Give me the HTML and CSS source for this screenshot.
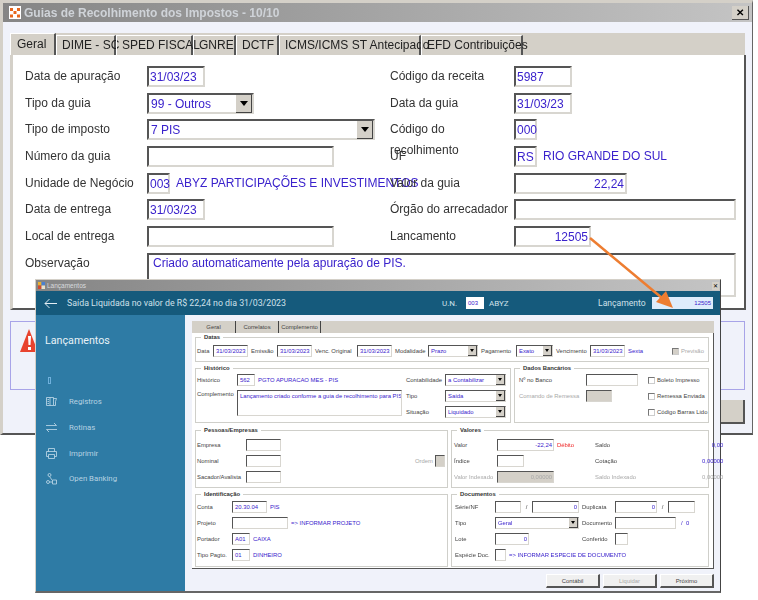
FILE: index.html
```html
<!DOCTYPE html>
<html lang="en">

<head>
    <meta charset="UTF-8">
    <title>Guias de Recolhimento dos Impostos</title>
    <link rel="stylesheet" href="styles.css">
</head>

<body>
    <!-- Back window -->
    <div class="win-back">
        <div class="back-title">
            <svg class="back-icon" width="12" height="13" viewBox="0 0 12 13">
                <rect width="12" height="13" fill="#fff" />
                <path d="M1 2h3v3H1zM8 2h3v3H8zM4.500 5h3v3h-3zM1 8.500h3v3H1zM8 8.500h3v3H8z" fill="#e8661c" />
            </svg>
            <span class="back-title-text">Guias de Recolhimento dos Impostos - 10/10</span>
            <span class="back-close">&#10005;</span>
        </div>
        <div class="back-body">
            <div class="tabs">
                <span class="tab active">Geral</span>
                <span class="tab t1">DIME - SC</span>
                <span class="tab t2">SPED FISCAL</span>
                <span class="tab t3">GNRE</span>
                <span class="tab t4">DCTF</span>
                <span class="tab t5">ICMS/ICMS ST Antecipado</span>
                <span class="tab t6">EFD Contribuições</span>
            </div>
            <div class="tab-page">
                <div class="form">
                    <div class="line"><label>Data de apuração</label><div class="fld w58">31/03/23</div></div>
                    <div class="line"><label>Código da receita</label><div class="fld w58">5987</div></div>
                    <div class="line"><label>Tipo da guia</label><div class="fld sel w107">99 - Outros<i class="drop"></i></div></div>
                    <div class="line"><label>Data da guia</label><div class="fld w58">31/03/23</div></div>
                    <div class="line"><label>Tipo de imposto</label><div class="fld sel w228">7 PIS<i class="drop"></i></div></div>
                    <div class="line"><label>Código do recolhimento</label><div class="fld w23">000</div></div>
                    <div class="line"><label>Número da guia</label><div class="fld w187"></div></div>
                    <div class="line"><label>UF</label><div class="fld w23">RS</div><span class="desc">RIO GRANDE DO SUL</span></div>
                    <div class="line"><label>Unidade de Negócio</label><div class="fld w23">003</div><span class="desc">ABYZ PARTICIPAÇÕES E INVESTIMENTOS</span></div>
                    <div class="line"><label>Valor da guia</label><div class="fld w113 num">22,24</div></div>
                    <div class="line"><label>Data de entrega</label><div class="fld w58">31/03/23</div></div>
                    <div class="line"><label>Órgão do arrecadador</label><div class="fld w222"></div></div>
                    <div class="line"><label>Local de entrega</label><div class="fld w187"></div></div>
                    <div class="line"><label>Lancamento</label><div class="fld w77 num">12505</div></div>
                    <div class="line obs"><label>Observação</label><div class="fld memo">Criado automaticamente pela apuração de PIS.</div></div>
                </div>
            </div>
            <div class="warn-panel">
                <svg width="18" height="24" viewBox="0 0 18 24">
                    <path d="M9 0L18 23H0z" fill="#e8432e" />
                    <path d="M8 7h3l-.5 9h-2zM8 18h3v3H8z" fill="#fff" />
                </svg>
            </div>
            <div class="back-buttons"><span class="back-btn"></span></div>
        </div>
    </div>

    <!-- Lancamentos window -->
    <div class="win-front">
        <div class="front-title">
            <svg width="7" height="7" viewBox="0 0 7 7">
                <rect width="3.500" height="3.500" fill="#e8b030" />
                <rect x="3.500" width="3.500" height="3.500" fill="#4a80d0" />
                <rect y="3.500" width="3.500" height="3.500" fill="#d04a30" />
                <rect x="3.500" y="3.500" width="3.500" height="3.500" fill="#e8e0c8" />
            </svg>
            <span class="front-title-text">Lançamentos</span>
            <span class="front-close">&#10005;</span>
        </div>
        <div class="front-head">
            <svg class="back-arrow" width="13" height="11" viewBox="0 0 13 11">
                <path d="M13 5.500H1M5.500 1L1 5.500 5.500 10" fill="none" stroke="#e4eef4" stroke-width="1" />
            </svg>
            <span class="head-title">Saída Liquidada no valor de R$ 22,24 no dia 31/03/2023</span>
            <span class="head-un">U.N.</span>
            <span class="head-un-fld">003</span>
            <span class="head-abyz">ABYZ</span>
            <span class="head-lanc">Lançamento</span>
            <span class="head-lanc-fld">12505</span>
        </div>
        <div class="front-body">
            <div class="sidebar">
                <div class="side-title">Lançamentos</div>
                <div class="side-glyph"></div>
                <div class="side-item">
                    <svg width="11" height="11" viewBox="0 0 11 11" fill="none" stroke="#c4dcea" stroke-width=".8">
                        <path d="M.5 1.500h7v8h-7zM4 1.500v8M1.500 3.500h1.500M1.500 5.500h1.500M1.500 7.500h1.500M7.500 2.500h3l-1 3v4h-2" />
                    </svg>
                    <span>Registros</span>
                </div>
                <div class="side-item">
                    <svg width="11" height="11" viewBox="0 0 11 11" fill="none" stroke="#c4dcea" stroke-width=".8">
                        <path d="M0 3.500h10.500L8 1M11 7.500H.5L3 10" />
                    </svg>
                    <span>Rotinas</span>
                </div>
                <div class="side-item">
                    <svg width="11" height="11" viewBox="0 0 11 11" fill="none" stroke="#c4dcea" stroke-width=".8">
                        <path d="M2.500 3.500V.5h6v3M2.500 8.500h-2v-5h10v5h-2M2.500 6.500h6v4h-6z" />
                    </svg>
                    <span>Imprimir</span>
                </div>
                <div class="side-item">
                    <svg width="11" height="12" viewBox="0 0 11 12" fill="none" stroke="#c4dcea" stroke-width=".8">
                        <circle cx="3.500" cy="2" r="1.500" />
                        <circle cx="2" cy="9" r="1.500" />
                        <path d="M3.500 3.500L6 7M3.500 9H6.500v-2h4v4h-4v-2" />
                    </svg>
                    <span>Open Banking</span>
                </div>
            </div>
            <div class="content">
                <div class="mini-tabs">
                    <span class="mini-tab active">Geral</span>
                    <span class="mini-tab m1">Correlatos</span>
                    <span class="mini-tab m2">Complemento</span>
                </div>
                <div class="mini-page">
                    <div class="group g-datas">
                        <span class="legend">Datas</span>
                        <div class="datas-row">
                            <span>Data</span><span class="box val">31/03/2023</span>
                            <span class="pl">Emissão</span><span class="box val">31/03/2023</span>
                            <span class="pl">Venc. Original</span><span class="box val">31/03/2023</span>
                            <span class="pl">Modalidade</span><span class="box val box-sel">Prazo<i class="mini-drop"></i></span>
                            <span class="pl">Pagamento</span><span class="box val box-sel">Exato<i class="mini-drop"></i></span>
                            <span class="pl">Vencimento</span><span class="box val">31/03/2023</span>
                            <span class="pl blue">Sexta</span>
                            <span class="check-line off"><i class="check gray"></i>Previsão</span>
                        </div>
                    </div>

                    <div class="group-row r-hist">
                        <div class="group g-hist">
                            <span class="legend">Histórico</span>
                            <div class="hist-left">
                                <span>Histórico</span>
                                <div class="inline"><span class="box val b18">562</span><span class="blue">PGTO APURACAO MES - PIS</span></div>
                                <span class="top">Complemento</span>
                                <div class="box memo-mini val">Lançamento criado conforme a guia de recolhimento para PIS</div>
                            </div>
                            <div class="hist-right">
                                <span>Contabilidade</span><span class="box val box-sel">a Contabilizar<i class="mini-drop"></i></span>
                                <span>Tipo</span><span class="box val box-sel">Saída<i class="mini-drop"></i></span>
                                <span>Situação</span><span class="box val box-sel">Liquidado<i class="mini-drop"></i></span>
                            </div>
                        </div>
                        <div class="group g-banco">
                            <span class="legend">Dados Bancários</span>
                            <div class="banco-grid">
                                <span>Nº no Banco</span><span class="box b52"></span><span class="check-line"><i class="check"></i>Boleto Impresso</span>
                                <span class="off">Comando de Remessa</span><span class="box b26 gray"></span><span class="check-line"><i class="check"></i>Remessa Enviada</span>
                                <span></span><span></span><span class="check-line"><i class="check"></i>Código Barras Lido</span>
                            </div>
                        </div>
                    </div>

                    <div class="group-row r-pessoas">
                        <div class="group g-left">
                            <span class="legend">Pessoas/Empresas</span>
                            <div class="pessoas-grid">
                                <span>Empresa</span><span class="box b35"></span><span></span>
                                <span>Nominal</span><span class="box b35"></span><span class="ordem"><span class="off">Ordem</span><span class="box b10 gray"></span></span>
                                <span>Sacador/Avalista</span><span class="box b35"></span><span></span>
                            </div>
                        </div>
                        <div class="group g-right">
                            <span class="legend">Valores</span>
                            <div class="valores-grid">
                                <span>Valor</span><div class="inline"><span class="box val b57 num">-22,24</span><span class="red">Débito</span></div><span>Saldo</span><span class="blue num">0,00</span>
                                <span>Índice</span><span class="box b27"></span><span>Cotação</span><span class="blue num">0,00000</span>
                                <span class="off">Valor Indexado</span><span class="box b57 gray num off">0,00000</span><span class="off">Saldo Indexado</span><span class="off num">0,00000</span>
                            </div>
                        </div>
                    </div>

                    <div class="group-row r-ident">
                        <div class="group g-left">
                            <span class="legend">Identificação</span>
                            <div class="ident-grid">
                                <span>Conta</span><div class="inline"><span class="box val b35">20.30.04</span><span class="blue">PIS</span></div>
                                <span>Projeto</span><div class="inline"><span class="box b56"></span><span class="blue">=&gt; INFORMAR PROJETO</span></div>
                                <span>Portador</span><div class="inline"><span class="box val b18">A01</span><span class="blue">CAIXA</span></div>
                                <span>Tipo Pagto.</span><div class="inline"><span class="box val b18">01</span><span class="blue">DINHEIRO</span></div>
                            </div>
                        </div>
                        <div class="group g-right">
                            <span class="legend">Documentos</span>
                            <div class="docs-grid">
                                <span>Série/NF</span>
                                <div class="inline tight"><span class="box b26"></span><span class="slash">/</span><span class="box val b47 num">0</span></div>
                                <span class="pl">Duplicata</span>
                                <div class="inline tight"><span class="box val b42 num">0</span><span class="slash">/</span><span class="box b27"></span></div>

                                <span>Tipo</span><span class="box val box-sel b84">Geral<i class="mini-drop"></i></span>
                                <span class="pl">Documento</span>
                                <div class="inline"><span class="box b61"></span><span class="blue doc-zero">/ &nbsp;0</span></div>

                                <span>Lote</span><span class="box val b34 num">0</span>
                                <span class="pl">Conferido</span><span class="box b13"></span>

                                <span>Espécie Doc.</span>
                                <div class="inline wide"><span class="box b11"></span><span class="blue">=&gt; INFORMAR ESPECIE DE DOCUMENTO</span></div>
                            </div>
                        </div>
                    </div>
                </div>
                <div class="front-buttons">
                    <span class="front-btn">Contábil</span>
                    <span class="front-btn off">Liquidar</span>
                    <span class="front-btn">Próximo</span>
                </div>
            </div>
        </div>
    </div>

    <!-- Callout arrow -->
    <svg class="callout" width="758" height="600" viewBox="0 0 758 600">
        <path d="M590 238L662 298" fill="none" stroke="#ed7d31" stroke-width="2.500" />
        <path d="M673 308L656 302 666 291z" fill="#ed7d31" />
    </svg>
</body>

</html>
```

FILE: styles.css
```css
body {
    margin: 0;
    background-color: white;
    font-family: "Liberation Sans", Arial, sans-serif;
    font-size: 12px;
    color: #333;
}

/* Back window */
.win-back {
    box-sizing: border-box;
    width: 753px;
    height: 435px;
    background-color: #f0f2fa;
    border: 3px solid #d4d0c8;
    border-bottom: 2px solid #555;
    border-right: 1px solid #666;
    filter: blur(.3px);
}

.back-title {
    height: 19px;
    display: flex;
    align-items: center;
    padding: 0 3px 0 6px;
    background: linear-gradient(to right, #858585, #c4c4c4);
}

.back-icon {
    margin-right: 3px;
}

.back-title-text {
    flex: 1;
    font-size: 12px;
    font-weight: bold;
    color: #cfd3d8;
}

.back-close {
    width: 16px;
    height: 13px;
    line-height: 13px;
    text-align: center;
    font-size: 10px;
    font-weight: bold;
    color: black;
    background-color: #d4d0c8;
    border-right: 1px solid #555;
    border-bottom: 1px solid #555;
}

.back-body {
    padding: 11px 0 0 7px;
}

.tabs {
    width: 735px;
    height: 22px;
    display: flex;
    background-color: #d4d0c8;
}

.tab {
    box-sizing: border-box;
    height: 20px;
    margin-top: 2px;
    line-height: 19px;
    padding-left: 5px;
    border-left: 1px solid white;
    border-top: 1px solid white;
    border-right: 2px solid #555;
    color: #222;
    white-space: nowrap;
}

.tab.active {
    width: 46px;
    height: 22px;
    margin-top: 0;
    line-height: 21px;
    padding-left: 6px;
}

.t1 { width: 60px; }
.t2 { width: 77px; }
.t3 { width: 43px; }
.t4 { width: 43px; }
.t5 { width: 142px; }
.t6 { width: 102px; }

.tab-page {
    box-sizing: border-box;
    width: 736px;
    height: 255px;
    background-color: white;
    border-left: 3px solid #d4d0c8;
    border-right: 2px solid #555;
    border-bottom: 2px solid #555;
    padding: 11px 0 0 12px;
}

.form {
    display: grid;
    grid-template-columns: 365px 1fr;
    grid-auto-rows: 26.67px;
}

.line {
    display: flex;
    align-items: flex-start;
}

.line:nth-child(even) label {
    width: 124px;
}

.line label {
    width: 122px;
    line-height: 21px;
    flex-shrink: 0;
}

.obs {
    grid-column: 1 / 3;
}

.fld {
    box-sizing: border-box;
    height: 21px;
    line-height: 19px;
    padding-left: 1px;
    background-color: white;
    border: 2px solid #d8d6d0;
    border-top-color: #555;
    border-left-color: #555;
    color: #3a22cc;
    white-space: nowrap;
}

.sel {
    display: flex;
    justify-content: space-between;
    padding-left: 2px;
}

.drop {
    width: 15px;
    height: 17px;
    background-color: #d4d0c8;
    border-right: 1px solid #444;
    border-bottom: 1px solid #444;
    position: relative;
}

.drop::after {
    content: "";
    position: absolute;
    left: 4px;
    top: 6px;
    border: 4px solid transparent;
    border-top: 5px solid black;
    border-bottom: 0;
}

.num {
    text-align: right;
}

.fld.num {
    padding-right: 1px;
}

.w23 { width: 23px; }
.w58 { width: 58px; }
.w77 { width: 77px; }
.w107 { width: 107px; }
.w113 { width: 113px; }
.w187 { width: 187px; }
.w222 { width: 222px; }
.w228 { width: 228px; }

.memo {
    width: 589px;
    height: 44px;
    line-height: 17px;
    padding: 0 0 0 4px;
}

.desc {
    margin-left: 6px;
    line-height: 21px;
    color: #3a22cc;
    white-space: nowrap;
}

.warn-panel {
    box-sizing: border-box;
    width: 735px;
    height: 69px;
    margin-top: 11px;
    padding: 7px 0 0 9px;
    border: 1px solid #a8a4e8;
}

.back-buttons {
    display: flex;
    justify-content: flex-end;
    width: 735px;
    margin-top: 10px;
}

.back-btn {
    width: 120px;
    height: 24px;
    background-color: #d4d0c8;
    border-right: 2px solid #555;
    border-bottom: 2px solid #555;
    box-sizing: border-box;
}

/* Lancamentos window */
.win-front {
    position: absolute;
    left: 35px;
    top: 279px;
    box-sizing: border-box;
    width: 686px;
    height: 314px;
    background-color: #f0f2fa;
    border-left: 1px solid #d4d0c8;
    border-top: 1px solid #d4d0c8;
    border-right: 1px solid #444;
    border-bottom: 2px solid #666;
    display: flex;
    flex-direction: column;
    filter: blur(.3px);
}

.front-title {
    height: 11px;
    display: flex;
    align-items: center;
    padding: 0 1px 0 2px;
    background: linear-gradient(to right, #858585, #c4c4c4);
    font-size: 6.500px;
    color: #d8dade;
}

.front-title-text {
    flex: 1;
    margin-left: 2px;
}

.front-close {
    width: 7px;
    height: 8px;
    line-height: 8px;
    text-align: center;
    font-size: 6px;
    color: black;
    background-color: #d4d0c8;
}

.front-head {
    height: 24px;
    display: flex;
    align-items: center;
    background-color: #155a7c;
    color: #cfe0ea;
    font-family: Roboto, sans-serif;
    font-size: 8.800px;
    white-space: nowrap;
}

.back-arrow {
    margin-left: 8px;
}

.head-title {
    margin-left: 10px;
    width: 375px;
}

.head-un {
    width: 24px;
    font-size: 8px;
}

.head-un-fld {
    box-sizing: border-box;
    width: 18px;
    height: 12px;
    line-height: 12px;
    padding-left: 2px;
    font-family: "Liberation Sans", sans-serif;
    font-size: 6px;
    color: #3a22cc;
    background-color: white;
}

.head-abyz {
    width: 109px;
    margin-left: 5px;
    font-size: 8px;
}

.head-lanc {
    width: 54px;
    font-size: 8.600px;
}

.head-lanc-fld {
    box-sizing: border-box;
    width: 61px;
    height: 12px;
    line-height: 12px;
    padding-right: 2px;
    text-align: right;
    font-family: "Liberation Sans", sans-serif;
    font-size: 6px;
    color: #3a22cc;
    background-color: #deecfb;
}

.front-body {
    flex: 1;
    display: flex;
    min-height: 0;
}

.sidebar {
    width: 149px;
    background-color: #2e7ba5;
    padding: 17px 0 0 9px;
    box-sizing: border-box;
    font-family: Roboto, sans-serif;
    color: #b6d2e2;
}

.side-title {
    font-size: 10.700px;
    line-height: 18px;
    color: #e8f2f7;
}

.side-glyph {
    box-sizing: border-box;
    width: 3px;
    height: 7px;
    margin: 27px 0 5px 3px;
    border: 1px solid #6fb0dc;
}

.side-item {
    display: flex;
    align-items: center;
    height: 25.700px;
    font-size: 7.800px;
    gap: 12px;
    padding-left: 1px;
}

.content {
    flex: 1;
    padding: 6px 6px 0 7px;
    font-size: 5.900px;
    color: #444;
    min-width: 0;
}

.mini-tabs {
    height: 12px;
    display: flex;
    background-color: #d4d0c8;
}

.mini-tab {
    box-sizing: border-box;
    height: 12px;
    line-height: 12px;
    text-align: center;
    border-right: 1px solid #444;
    white-space: nowrap;
}

.mini-tab.active { width: 44px; }
.m1 { width: 43px; }
.m2 { width: 42px; }

.mini-page {
    box-sizing: border-box;
    height: 236px;
    padding: 4px 0 0 3px;
    background-color: white;
    border-right: 1px solid #555;
    border-bottom: 1px solid #555;
}

.group {
    box-sizing: border-box;
    position: relative;
    border: 1px solid #cfcfca;
}

.legend {
    position: absolute;
    left: 5px;
    top: -5px;
    padding: 0 3px;
    background-color: white;
    font-weight: bold;
    color: #333;
    line-height: 9px;
}

.group-row {
    display: flex;
    gap: 3px;
}

.g-datas {
    width: 514px;
    height: 25px;
}

.datas-row {
    display: grid;
    grid-template-columns: 16px 35px 29px 35px 45px 35px 36px 50px 38px 37px 37px 35px 47px 1fr;
    align-items: center;
    height: 12px;
    margin: 7px 0 0 1px;
    white-space: nowrap;
}

.pl {
    padding-left: 3px;
}

.box {
    box-sizing: border-box;
    display: block;
    height: 12px;
    line-height: 10px;
    background-color: white;
    border: 1px solid #d8d6d0;
    border-top-color: #555;
    border-left-color: #555;
    white-space: nowrap;
    overflow: hidden;
}

.val {
    color: #3a22cc;
    padding-left: 2px;
}

.box-sel {
    display: flex;
    justify-content: space-between;
}

.mini-drop {
    width: 8px;
    flex-shrink: 0;
    background-color: #d4d0c8;
    border-right: 1px solid #444;
    border-bottom: 1px solid #444;
    position: relative;
}

.mini-drop::after {
    content: "";
    position: absolute;
    left: 2px;
    top: 3px;
    border: 2px solid transparent;
    border-top: 3px solid black;
    border-bottom: 0;
}

.gray {
    background-color: #d4d0c8;
}

.off {
    color: #a8a8a8;
}

.blue {
    color: #3a22cc;
}

.red {
    color: #ee2222;
}

.box.num {
    padding-right: 1px;
}

.check-line {
    display: flex;
    align-items: center;
    gap: 2px;
    white-space: nowrap;
}

.check {
    box-sizing: border-box;
    width: 7px;
    height: 7px;
    background-color: white;
    border: 1px solid #777;
    border-right-color: #ccc;
    border-bottom-color: #ccc;
}

.check.gray {
    background-color: #d4d0c8;
}

.inline {
    display: flex;
    align-items: center;
    gap: 3px;
    white-space: nowrap;
}

.tight {
    gap: 0;
}

.r-hist {
    margin-top: 6px;
}

.g-hist {
    width: 316px;
    height: 55px;
    display: flex;
}

.hist-left {
    width: 209px;
    margin: 5px 0 0 1px;
    display: grid;
    grid-template-columns: 40px 166px;
    grid-template-rows: 12px 26px;
    row-gap: 4px;
    align-items: center;
}

.top {
    align-self: start;
    margin-top: 1px;
}

.memo-mini {
    height: 26px;
    width: 165px;
    white-space: nowrap;
}

.hist-right {
    margin-top: 5px;
    display: grid;
    grid-template-columns: 39px 61px;
    grid-auto-rows: 12px;
    row-gap: 4px;
    align-items: center;
    white-space: nowrap;
}

.g-banco {
    width: 195px;
    height: 55px;
}

.banco-grid {
    margin: 5px 0 0 4px;
    display: grid;
    grid-template-columns: 67px 62px 1fr;
    grid-auto-rows: 12px;
    row-gap: 4px;
    align-items: center;
    white-space: nowrap;
}

.b10 { width: 10px; }
.b11 { width: 11px; }
.b13 { width: 13px; }
.b18 { width: 18px; }
.b26 { width: 26px; }
.b27 { width: 27px; }
.b34 { width: 34px; }
.b35 { width: 35px; }
.b42 { width: 42px; }
.b47 { width: 47px; }
.b52 { width: 52px; }
.b56 { width: 56px; }
.b57 { width: 57px; }
.b61 { width: 61px; }
.b84 { width: 84px; }

.r-pessoas {
    margin-top: 7px;
}

.g-left {
    width: 253px;
}

.g-right {
    width: 258px;
}

.r-pessoas .group {
    height: 58px;
}

.pessoas-grid {
    margin: 8px 0 0 1px;
    display: grid;
    grid-template-columns: 49px 35px 1fr;
    grid-auto-rows: 12px;
    row-gap: 4px;
    align-items: center;
    white-space: nowrap;
}

.ordem {
    display: flex;
    justify-content: flex-end;
    align-items: center;
    gap: 2px;
    padding-right: 2px;
}

.valores-grid {
    margin: 8px 0 0 2px;
    display: grid;
    grid-template-columns: 43px 98px 107px 1fr;
    grid-auto-rows: 12px;
    row-gap: 4px;
    align-items: center;
    white-space: nowrap;
}

.valores-grid > span.num {
    text-align: right;
    padding-right: 3px;
}

.valores-grid .box.num {
    text-align: right;
    padding-right: 1px;
}

.inline .box.num,
.docs-grid .box.num {
    text-align: right;
}

.r-ident {
    margin-top: 6px;
}

.r-ident .group {
    height: 73px;
}

.ident-grid {
    margin: 6px 0 0 1px;
    display: grid;
    grid-template-columns: 35px 1fr;
    grid-auto-rows: 12px;
    row-gap: 4px;
    align-items: center;
    white-space: nowrap;
}

.docs-grid {
    margin: 6px 0 0 3px;
    display: grid;
    grid-template-columns: 40px 84px 36px 1fr;
    grid-auto-rows: 12px;
    row-gap: 4px;
    align-items: center;
    white-space: nowrap;
}

.slash {
    width: 11px;
    text-align: center;
}

.doc-zero {
    margin-left: 2px;
}

.wide {
    grid-column: 2 / 5;
}

.front-buttons {
    display: flex;
    justify-content: flex-end;
    gap: 3px;
    margin-top: 5px;
}

.front-btn {
    box-sizing: border-box;
    width: 54px;
    height: 14px;
    line-height: 12px;
    text-align: center;
    background-color: #f0f0f0;
    border-right: 2px solid #555;
    border-bottom: 2px solid #555;
    border-top: 1px solid white;
    border-left: 1px solid white;
}

/* Callout arrow */
.callout {
    position: absolute;
    left: 0;
    top: 0;
    pointer-events: none;
}
```
